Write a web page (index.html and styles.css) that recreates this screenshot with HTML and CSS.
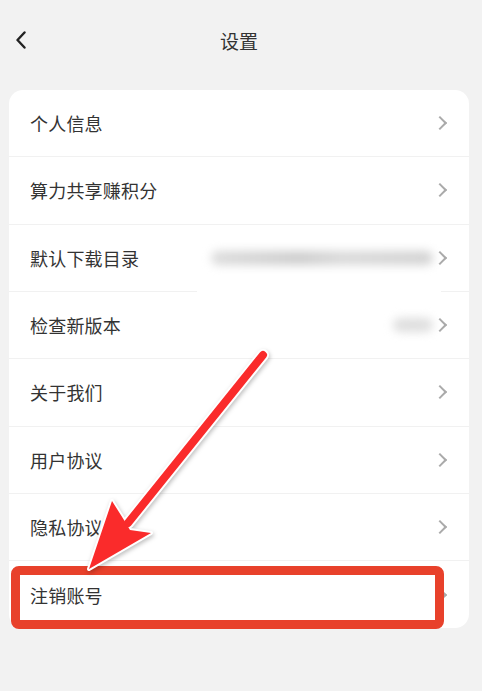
FILE: index.html
```html
<!DOCTYPE html>
<html lang="zh">
<head>
<meta charset="utf-8">
<title>设置</title>
<link rel="stylesheet" href="styles.css">
</head>
<body>
<div class="page">
  <header class="topbar">
    <svg class="back" width="12" height="18" viewBox="0 0 12 18"><path d="M9.5 1.5 L2.5 9 L9.5 16.5" fill="none" stroke="#222" stroke-width="2.4" stroke-linecap="round" stroke-linejoin="round"/></svg>
    <h1 class="title">设置</h1>
  </header>
  <main class="card">
    <div class="row"><span class="label">个人信息</span><span class="chev"></span></div>
    <div class="row"><span class="label">算力共享赚积分</span><span class="chev"></span></div>
    <div class="row row-cover"><span class="label">默认下载目录</span><span class="blur blur-long"></span><span class="chev"></span></div>
    <div class="row"><span class="label">检查新版本</span><span class="blur blur-short"></span><span class="chev"></span></div>
    <div class="row"><span class="label">关于我们</span><span class="chev"></span></div>
    <div class="row"><span class="label">用户协议</span><span class="chev"></span></div>
    <div class="row"><span class="label">隐私协议</span><span class="chev"></span></div>
    <div class="row last"><span class="label">注销账号</span><span class="chev"></span></div>
  </main>
  <div class="highlight"></div>
  <svg class="arrow" width="482" height="691" viewBox="0 0 482 691">
    <g class="arrow-outline">
      <line x1="263" y1="355" x2="128" y2="523" stroke="#fff" stroke-width="12" stroke-linecap="round"/>
      <polygon points="89,569 112,501 124,520 130,530 151,533" fill="#fff" stroke="#fff" stroke-width="4" stroke-linejoin="round"/>
    </g>
    <line x1="263" y1="355" x2="128" y2="523" stroke="#fa2b2b" stroke-width="8" stroke-linecap="round"/>
    <polygon points="89,569 112,501 124,520 130,530 151,533" fill="#fa2b2b"/>
  </svg>
</div>
</body>
</html>
```

FILE: styles.css
```css
html, body {
  margin: 0;
  padding: 0;
  background: #f2f2f2;
}
body {
  font-family: "Noto Sans CJK SC", "Noto Sans", sans-serif;
  color: #333;
}
.page {
  position: relative;
  width: 482px;
  height: 691px;
  overflow: hidden;
}
.topbar {
  height: 80px;
  display: flex;
  align-items: center;
  justify-content: center;
  position: relative;
}
.back {
  position: absolute;
  left: 15px;
  top: 31px;
}
.title {
  margin: 0;
  font-size: 19px;
  font-weight: normal;
  color: #333;
  transform: translateX(-2px);
}
.card {
  margin: 10px 13px 0 9px;
  background: #fff;
  border-radius: 14px;
  overflow: hidden;
}
.row {
  height: 67.33px;
  box-sizing: border-box;
  border-bottom: 1px solid #f1f1f1;
  display: flex;
  align-items: center;
  padding: 0 21px 0 21px;
  position: relative;
}
.row.last {
  border-bottom: none;
  height: 67px;
}
.label {
  font-size: 18px;
  color: #333;
  flex: 1;
  letter-spacing: 0.2px;
}
.chev {
  width: 8px;
  height: 8px;
  border-top: 2px solid #aaa;
  border-right: 2px solid #aaa;
  transform: rotate(45deg);
  margin-right: 3px;
}
.blur {
  height: 14px;
  border-radius: 7px;
  filter: blur(5px);
  margin-right: 2px;
}
.blur-long {
  width: 222px;
  background: linear-gradient(90deg, #dcdcdc, #cdcdcd 40%, #dadada 60%, #d2d2d2);
}
.blur-short {
  width: 40px;
  background: #dedede;
}
.row-cover::after {
  content: "";
  position: absolute;
  left: 188px;
  right: 28px;
  bottom: -2px;
  height: 4px;
  background: #fff;
}
.highlight {
  position: absolute;
  left: 11px;
  top: 566px;
  width: 433px;
  height: 63px;
  box-sizing: border-box;
  border: 9px solid #e8412b;
  border-radius: 8px;
}
.arrow {
  position: absolute;
  left: 0;
  top: 0;
  pointer-events: none;
}
.arrow-outline {
  filter: drop-shadow(1px 2px 2px rgba(0,0,0,0.25));
}
```
